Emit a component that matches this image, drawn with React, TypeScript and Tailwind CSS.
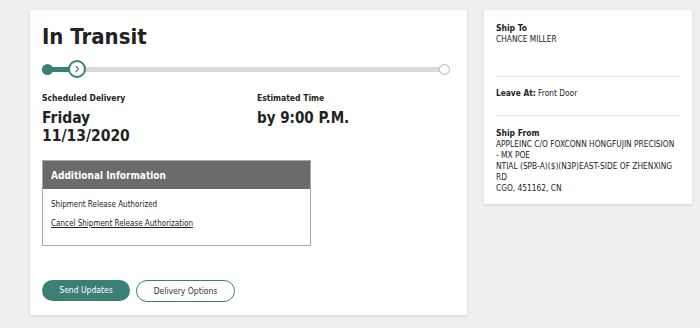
import React from 'react';

const font = { fontFamily: '"DejaVu Sans Condensed", "DejaVu Sans", Verdana, sans-serif' };

const ProgressBar: React.FC = () => (
  <div className="relative mt-[9px] h-[18px] w-[408px]">
    {/* track */}
    <div className="absolute left-0 right-[4px] top-[7px] h-[5px] rounded-full bg-[#d9d9d9]" />
    {/* filled part */}
    <div className="absolute left-0 top-[7px] h-[5px] w-[30px] rounded-full bg-[#3b8077]" />
    <div className="absolute left-0 top-[4px] h-[11px] w-[11px] rounded-full bg-[#3b8077]" />
    {/* current step */}
    <div className="absolute left-[26px] top-0 flex h-[18px] w-[18px] items-center justify-center rounded-full border-2 border-[#3b8077] bg-white">
      <svg width="8" height="8" viewBox="0 0 8 8" fill="none">
        <path d="M3 1.5 L5.5 4 L3 6.5" stroke="#3b8077" strokeWidth="1.2" strokeLinecap="round" strokeLinejoin="round" />
      </svg>
    </div>
    {/* last step */}
    <div className="absolute right-0 top-[4px] h-[11px] w-[11px] rounded-full border border-[#b5b5b5] bg-white" />
  </div>
);

const App: React.FC = () => {
  return (
    <div className="flex h-[328px] w-[700px] items-start gap-[17px] bg-[#efefee] pl-[30px] pt-[10px] text-[#222]" style={font}>
      {/* Main status card */}
      <div className="flex h-[305px] w-[437px] flex-col bg-white px-[12px] pt-[13px] shadow-[0_1px_3px_rgba(0,0,0,0.12)]">
        <h1 className="text-[22px] font-bold leading-[28px] text-[#222]">In Transit</h1>
        <ProgressBar />

        <div className="mt-[14px] flex">
          <div className="w-[215px]">
            <div className="text-[8.5px] font-bold leading-[12px]">Scheduled Delivery</div>
            <div className="mt-[5px] text-[15.5px] font-bold leading-[18px]">
              Friday
              <br />
              11/13/2020
            </div>
          </div>
          <div>
            <div className="text-[8.5px] font-bold leading-[12px]">Estimated Time</div>
            <div className="mt-[5px] text-[15px] font-bold leading-[18px]">by 9:00 P.M.</div>
          </div>
        </div>

        {/* Additional Information */}
        <div className="mt-[15px] w-[269px] border border-[#a9a9a9]">
          <div className="flex h-[28px] items-center bg-[#6b6b6b] px-[8px] text-[10px] font-bold text-white">
            Additional Information
          </div>
          <div className="px-[8px] pb-[15px] pt-[10px] text-[8px] leading-[12px] text-[#222]">
            <div>Shipment Release Authorized</div>
            <div className="mt-[7px] underline">Cancel Shipment Release Authorization</div>
          </div>
        </div>

        <div className="mt-auto mb-[13px] flex gap-[6px]">
          <button className="h-[21px] w-[88px] rounded-full bg-[#3b8077] text-[8.5px] text-white">Send Updates</button>
          <button className="h-[22px] w-[99px] rounded-full border border-[#3b8077] bg-white text-[8.5px] text-[#333]">
            Delivery Options
          </button>
        </div>
      </div>

      {/* Shipping details card */}
      <div className="w-[208px] bg-white px-[12px] pt-[12px] pb-[10px] text-[8.3px] leading-[11px] shadow-[0_1px_3px_rgba(0,0,0,0.12)]">
        <div className="h-[54px]">
          <div className="text-[8.5px] font-bold leading-[12px]">Ship To</div>
          <div>CHANCE MILLER</div>
        </div>
        <div className="border-t border-[#e2e2e2] pb-[16px] pt-[11px]">
          <span className="font-bold">Leave At:</span> Front Door
        </div>
        <div className="border-t border-[#e2e2e2] pt-[11px]">
          <div className="text-[8.5px] font-bold leading-[12px]">Ship From</div>
          <div>APPLEINC C/O FOXCONN HONGFUJIN PRECISION</div>
          <div>- MX POE</div>
          <div>NTIAL (SPB-A)($)(N3P)EAST-SIDE OF ZHENXING</div>
          <div>RD</div>
          <div>CGO, 451162, CN</div>
        </div>
      </div>
    </div>
  );
};

export default App;
